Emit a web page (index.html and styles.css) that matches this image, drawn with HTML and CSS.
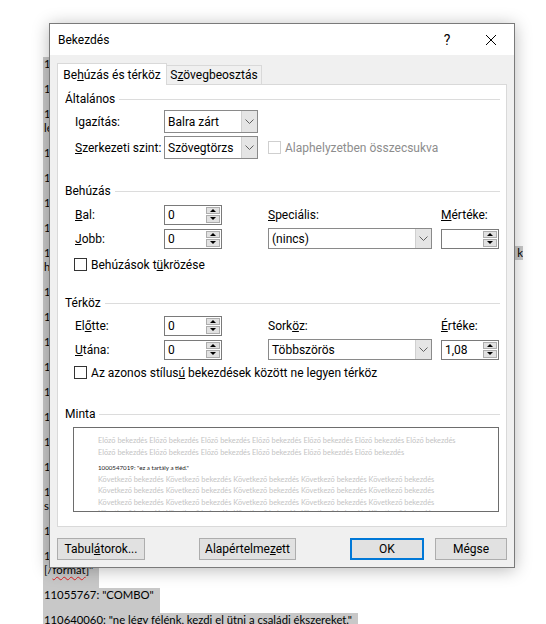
FILE: index.html
```html
<!DOCTYPE html>
<html lang="hu">
<head>
<meta charset="utf-8">
<title>Bekezdés</title>
<link rel="stylesheet" href="styles.css">
</head>
<body>
<div class="doc">
  <div class="p"><div class="ln">10453321: "ne állj meg most"</div></div>
  <div class="p"><div class="ln">10460012: "a kincs a barlangban van."</div></div>
  <div class="p"><div class="ln">10471190: "ha tovább mész, a hídon túl találsz egy régi</div><div class="ln">léghajót."</div></div>
  <div class="p"><div class="ln">10488231: "siess!"</div></div>
  <div class="p"><div class="ln">10490075: "ez nem a te utad."</div></div>
  <div class="p"><div class="ln">10502314: "fogd a kulcsot."</div></div>
  <div class="p"><div class="ln">10519980: "a kapu zárva."</div></div>
  <div class="p"><div class="ln long"><span>10533467: "a torony tetején vár rád a végső próba, de előbb meg kell találnod a</span><span>k</span></div><div class="ln">hármat."</div></div>
  <div class="p"><div class="ln">10540088: "köszönöm."</div></div>
  <div class="p"><div class="ln">10551203: "vigyázz a lépcsőn."</div></div>
  <div class="p"><div class="ln">10562771: "ki vagy te?"</div></div>
  <div class="p"><div class="ln">10573310: "gyere velem."</div></div>
  <div class="p"><div class="ln">10584492: "nincs idő."</div></div>
  <div class="p"><div class="ln">10595036: "a térkép hamis."</div></div>
  <div class="p"><div class="ln">10606621: "tűz!"</div></div>
  <div class="p"><div class="ln">10611409: "hallod ezt?"</div></div>
  <div class="p"><div class="ln">10617744: "ez az utolsó esélyed, hogy visszafordulj a</div><div class="ln">sötétből."</div></div>
  <div class="p"><div class="ln">10628859: "jól van."</div></div>
  <div class="p"><div class="ln">11042210: "[format color=red]veszély[</div><div class="ln">[/<span class="sq">format</span>]"</div></div>
  <div class="p"><div class="ln">11055767: "COMBO"</div></div>
  <div class="p"><div class="ln">110640060: "ne légy félénk, kezdj el ütni a családi ékszereket."</div></div>
</div>

<div class="dialog">
  <div class="titlebar">
    <span class="title">Bekezdés</span>
    <span class="help">?</span>
    <span class="close"><svg width="12" height="12" viewBox="0 0 12 12"><path d="M1 1 L11 11 M11 1 L1 11" stroke="#000" stroke-width="1" fill="none"/></svg></span>
  </div>
  <div class="dbody">
    <div class="tabs">
      <div class="tab on"><span>Be<u>h</u>úzás és térköz</span></div>
      <div class="tab"><span>S<u>z</u>övegbeosztás</span></div>
    </div>
    <div class="panel">
      <div class="sec-h"><span>Általános</span><i class="rule"></i></div>
      <div class="rows">
        <div class="row r-c first">
          <span class="lbl"><span>I<u>g</u>azítás:</span></span>
          <div class="combo w94"><span class="cv">Balra zárt</span><span class="dd"><svg width="9" height="5" viewBox="0 0 9 5"><path d="M0.5 0.5 L4.5 4.5 L8.5 0.5" fill="none" stroke="#606060"/></svg></span></div>
        </div>
        <div class="row r-c">
          <span class="lbl"><span><u>S</u>zerkezeti szint:</span></span>
          <div class="combo w94"><span class="cv">Szövegtörzs</span><span class="dd"><svg width="9" height="5" viewBox="0 0 9 5"><path d="M0.5 0.5 L4.5 4.5 L8.5 0.5" fill="none" stroke="#606060"/></svg></span></div>
          <span class="chk dis"><i class="box"></i><span>Alaphelyzetben összecsukva</span></span>
        </div>
      </div>

      <div class="sec-h gap24"><span>Behúzás</span><i class="rule"></i></div>
      <div class="rows grid g1">
        <span class="lbl"><span><u>B</u>al:</span></span>
        <div class="spin"><span class="sv">0</span><span class="sb"><i><b class="up"></b></i><i><b class="dn"></b></i></span></div>
        <span class="lbl2"><span><u>S</u>peciális:</span></span>
        <span class="lbl2"><span><u>M</u>értéke:</span></span>
        <span class="lbl"><span><u>J</u>obb:</span></span>
        <div class="spin"><span class="sv">0</span><span class="sb"><i><b class="up"></b></i><i><b class="dn"></b></i></span></div>
        <div class="combo w164"><span class="cv">(nincs)</span><span class="dd"><svg width="9" height="5" viewBox="0 0 9 5"><path d="M0.5 0.5 L4.5 4.5 L8.5 0.5" fill="none" stroke="#606060"/></svg></span></div>
        <div class="spin"><span class="sv"></span><span class="sb"><i><b class="up"></b></i><i><b class="dn"></b></i></span></div>
      </div>
      <div class="rows"><span class="chk c1"><i class="box"></i><span>Behúzások t<u>ü</u>krözése</span></span></div>

      <div class="sec-h gap24"><span>Térköz</span><i class="rule"></i></div>
      <div class="rows grid g2">
        <span class="lbl"><span>El<u>ő</u>tte:</span></span>
        <div class="spin"><span class="sv">0</span><span class="sb"><i><b class="up"></b></i><i><b class="dn"></b></i></span></div>
        <span class="lbl2"><span>Sork<u>ö</u>z:</span></span>
        <span class="lbl2"><span><u>É</u>rtéke:</span></span>
        <span class="lbl"><span><u>U</u>tána:</span></span>
        <div class="spin"><span class="sv">0</span><span class="sb"><i><b class="up"></b></i><i><b class="dn"></b></i></span></div>
        <div class="combo w164"><span class="cv">Többszörös</span><span class="dd"><svg width="9" height="5" viewBox="0 0 9 5"><path d="M0.5 0.5 L4.5 4.5 L8.5 0.5" fill="none" stroke="#606060"/></svg></span></div>
        <div class="spin"><span class="sv">1,08</span><span class="sb"><i><b class="up"></b></i><i><b class="dn"></b></i></span></div>
      </div>
      <div class="rows"><span class="chk c2"><i class="box"></i><span>Az azonos stílus<u>ú</u> bekezdések között ne legyen térköz</span></span></div>

      <div class="sec-h gap27"><span>Minta</span><i class="rule"></i></div>
      <div class="preview">
        <div class="pv g">Előző bekezdés Előző bekezdés Előző bekezdés Előző bekezdés Előző bekezdés Előző bekezdés Előző bekezdés</div>
        <div class="pv g">Előző bekezdés Előző bekezdés Előző bekezdés Előző bekezdés Előző bekezdés Előző bekezdés</div>
        <div class="pv cur">1000547019: "ez a tartály a tiéd."</div>
        <div class="pv g">Következő bekezdés Következő bekezdés Következő bekezdés Következő bekezdés Következő bekezdés</div>
        <div class="pv g">Következő bekezdés Következő bekezdés Következő bekezdés Következő bekezdés Következő bekezdés</div>
        <div class="pv g">Következő bekezdés Következő bekezdés Következő bekezdés Következő bekezdés Következő bekezdés</div>
        <div class="pv g">Következő bekezdés Következő bekezdés Következő bekezdés Következő bekezdés Következő bekezdés</div>
      </div>
    </div>
    <div class="btns">
      <button class="btn b-tab">Tabul<u>á</u>torok...</button>
      <button class="btn b-def">Alapértelme<u>z</u>ett</button>
      <button class="btn b-ok">OK</button>
      <button class="btn b-cancel">Mégse</button>
    </div>
  </div>
</div>
</body>
</html>
```

FILE: styles.css
```css
* { box-sizing: border-box; margin: 0; padding: 0; }
html, body { background: #fff; }
body {
  width: 546px;
  height: 624px;
  overflow: hidden;
  position: relative;
  font-family: Lato, "Liberation Sans", sans-serif;
}
u { text-decoration: underline; text-underline-offset: 1px; }

/* document behind the dialog */
.doc {
  padding: 57px 0 0 43px;
  font-size: 11.3px;
  line-height: 14px;
  color: #000;
}
.ln {
  background: #c8c8c8;
  width: fit-content;
  padding: 0 6px 0 1px;
  white-space: nowrap;
}
.p .ln:last-child { padding-bottom: 11px; }
.ln.long {
  width: 480px;
  display: flex;
  justify-content: space-between;
  padding-right: 0;
  overflow: hidden;
}
.sq {
  text-decoration: underline wavy #e02020;
  text-decoration-skip-ink: none;
  text-decoration-thickness: 1px;
  text-underline-offset: 2px;
}

/* dialog */
.dialog {
  position: absolute;
  left: 49px;
  top: 23px;
  width: 466px;
  height: 545px;
  border: 1px solid #7a7a7a;
  background: #f0f0f0;
  box-shadow: 0 2px 16px rgba(0, 0, 0, 0.28);
  font-family: Roboto, "Noto Sans", sans-serif;
  font-size: 12px;
  color: #000;
  display: flex;
  flex-direction: column;
}
.titlebar {
  height: 31px;
  background: #fff;
  display: flex;
  align-items: center;
  padding-left: 8px;
}
.title { flex: 1; }
.help { width: 20px; text-align: center; font-size: 14px; }
.close {
  width: 40px;
  height: 31px;
  margin: 0 3px 0 14px;
  display: flex;
  align-items: center;
  justify-content: center;
}
.dbody { flex: 1; padding: 8px 7px 0 7px; }

.tabs { display: flex; align-items: flex-end; height: 21px; }
.tab {
  height: 19px;
  width: 95px;
  border: 1px solid #d9d9d9;
  border-left: 0;
  border-bottom: 0;
  background: #f0f0f0;
  display: flex;
  align-items: center;
  justify-content: center;
}
.tab.on {
  height: 22px;
  width: 110px;
  border-left: 1px solid #d9d9d9;
  background: #fff;
  margin-bottom: -1px;
  position: relative;
  z-index: 1;
}

.panel {
  height: 443px;
  background: #fff;
  border: 1px solid #d9d9d9;
  padding: 6px 6px 0 7px;
}
.sec-h { display: flex; align-items: center; height: 16px; }
.rule { flex: 1; height: 1px; background: #dcdcdc; margin-left: 4px; }
.gap24 { margin-top: 24px; }
.gap27 { margin-top: 27px; }

.rows { padding-left: 10px; }
.row { display: flex; align-items: center; height: 23px; margin-top: 3px; }
.lbl { width: 89px; display: flex; align-items: center; }
.lbl2 { display: flex; align-items: center; }

.grid {
  display: grid;
  grid-template-columns: 89px 104px 173px 58px;
  grid-auto-rows: 21px;
  row-gap: 3px;
  align-items: center;
}
.g1 { margin-top: 5px; }
.g2 { margin-top: 4px; }

.combo {
  height: 23px;
  border: 1px solid #8a8a8a;
  background: #fff;
  display: flex;
}
.grid .combo { height: 21px; }
.w94 { width: 94px; }
.w164 { width: 164px; }
.cv { flex: 1; padding-left: 3px; display: flex; align-items: center; }
.dd {
  width: 16px;
  background: #e5e5e5;
  border-left: 1px solid #d0d0d0;
  display: flex;
  align-items: center;
  justify-content: center;
}

.spin {
  width: 58px;
  height: 20px;
  border: 1px solid #7a7a7a;
  background: #fff;
  display: flex;
}
.sv { flex: 1; padding-left: 3px; display: flex; align-items: center; }
.sb { width: 15px; display: flex; flex-direction: column; padding: 1px 1px 1px 0; gap: 1px; }
.sb i {
  flex: 1;
  background: #e1e1e1;
  border: 1px solid #adadad;
  display: flex;
  align-items: center;
  justify-content: center;
}
.up, .dn { width: 0; height: 0; border-left: 3px solid transparent; border-right: 3px solid transparent; }
.up { border-bottom: 3px solid #000; }
.dn { border-top: 3px solid #000; }

.chk { display: flex; align-items: center; }
.row .chk { margin-left: 10px; }
.box {
  width: 13px;
  height: 13px;
  border: 1px solid #333;
  background: #fff;
  margin-right: 4px;
}
.chk.dis { color: #8d8d8d; }
.chk.dis .box { border-color: #cfcfcf; }
.c1 { margin-top: 9px; height: 13px; margin-left: -1px; }
.c2 { margin-top: 6px; height: 13px; margin-left: -1px; }

.preview {
  margin: 5px 0 0 8px;
  width: 426px;
  height: 85px;
  border: 1px solid #6d6d6d;
  overflow: hidden;
  padding: 7px 0 0 24px;
  font-family: Lato, "Liberation Sans", sans-serif;
}
.pv { line-height: 11.5px; white-space: nowrap; }
.g { color: #c4c4c4; font-size: 7.4px; }
.cur { margin-top: 4.25px; font-size: 6.2px; color: #222; }

.btns { display: flex; height: 22px; margin-top: 11px; }
.btn {
  height: 22px;
  border: 1px solid #adadad;
  background: #e1e1e1;
  font: inherit;
  color: #000;
}
.b-tab { width: 88px; }
.b-def { width: 97px; margin-left: 54px; }
.b-ok { width: 74px; margin-left: 54px; border: 2px solid #0078d7; }
.b-cancel { width: 72px; margin-left: 11px; }
```
